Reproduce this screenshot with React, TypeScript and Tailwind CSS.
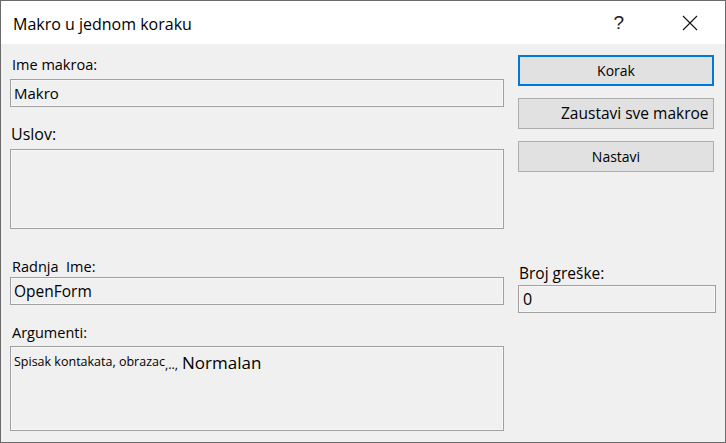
import React from "react";

const font = { fontFamily: '"Open Sans", "Liberation Sans", sans-serif' };

function Box({ className = "", children }: { className?: string; children?: React.ReactNode }) {
  return (
    <div className={"border border-[#a0a0a0] bg-[#f0f0f0] " + className}>
      <div className="h-full w-full border border-[#f7f7f7]">{children}</div>
    </div>
  );
}

export default function App() {
  return (
    <div
      className="w-[726px] h-[443px] border border-[#6a6a6a] flex flex-col bg-[#f0f0f0] text-[#000]"
      style={font}
    >
      <div className="h-[43px] bg-white flex items-center pl-[12px] pr-[27px]">
        <div className="text-[16px] leading-[20px] pt-[2px] flex-1">Makro u jednom koraku</div>
        <div
          className="text-[19px] leading-[20px] text-[#1a1a1a] mr-[58px] pt-[1px]"
          style={{ fontFamily: '"Liberation Sans", sans-serif' }}
        >
          ?
        </div>
        <svg width="16" height="16" viewBox="0 0 16 16" className="mt-[1px]">
          <path d="M1 1 L15 15 M15 1 L1 15" stroke="#111" strokeWidth="1.1" fill="none" />
        </svg>
      </div>
      <div className="flex-1 flex pl-[9px]">
        <div className="w-[494px] flex flex-col pt-[13px]">
          <div className="text-[14.5px] leading-[16px] h-[16px] pl-[2px]">Ime makroa:</div>
          <Box className="mt-[6px] h-[28px]">
            <div className="text-[15px] leading-[24px] pl-[2px]">Makro</div>
          </Box>
          <div className="mt-[17px] text-[16px] leading-[20px] h-[20px] pl-[1px]">Uslov:</div>
          <Box className="mt-[5px] h-[80px]" />
          <div className="mt-[30px] text-[14.5px] leading-[16px] h-[16px] pl-[2px]">
            Radnja&nbsp;&nbsp;Ime:
          </div>
          <Box className="mt-[2px] h-[28px]">
            <div className="text-[15.5px] leading-[24px] pl-[2px]">OpenForm</div>
          </Box>
          <div className="mt-[20px] text-[14.5px] leading-[16px] h-[16px] pl-[2px]">Argumenti:</div>
          <Box className="mt-[5px] h-[85px]">
            <div className="flex items-baseline pl-[2px] pt-[2px]">
              <span className="text-[12.5px] leading-[16px]">Spisak kontakata, obrazac</span>
              <span className="text-[12.5px] leading-[16px] relative top-[3px]">,..,</span>
              <span className="text-[17px] leading-[20px] ml-[4px] relative top-[3px]">Normalan</span>
            </div>
          </Box>
        </div>
        <div className="w-[198px] ml-[14px] flex flex-col pt-[11px]">
          <div className="h-[31px] w-[196px] border-2 border-[#0078d7] bg-[#e1e1e1] flex items-center justify-center text-[14px]">
            Korak
          </div>
          <div className="mt-[12px] h-[31px] w-[196px] border border-[#adadad] bg-[#e1e1e1] flex items-center pl-[42px] text-[15.5px]">
            Zaustavi sve makroe
          </div>
          <div className="mt-[12px] h-[31px] w-[196px] border border-[#adadad] bg-[#e1e1e1] flex items-center justify-center text-[14px]">
            Nastavi
          </div>
          <div className="mt-[91px] text-[15.5px] leading-[20px] h-[20px] pl-[1px]">Broj greške:</div>
          <Box className="mt-[2px] h-[28px]">
            <div className="text-[16px] leading-[24px] pl-[3px]">0</div>
          </Box>
        </div>
      </div>
    </div>
  );
}
